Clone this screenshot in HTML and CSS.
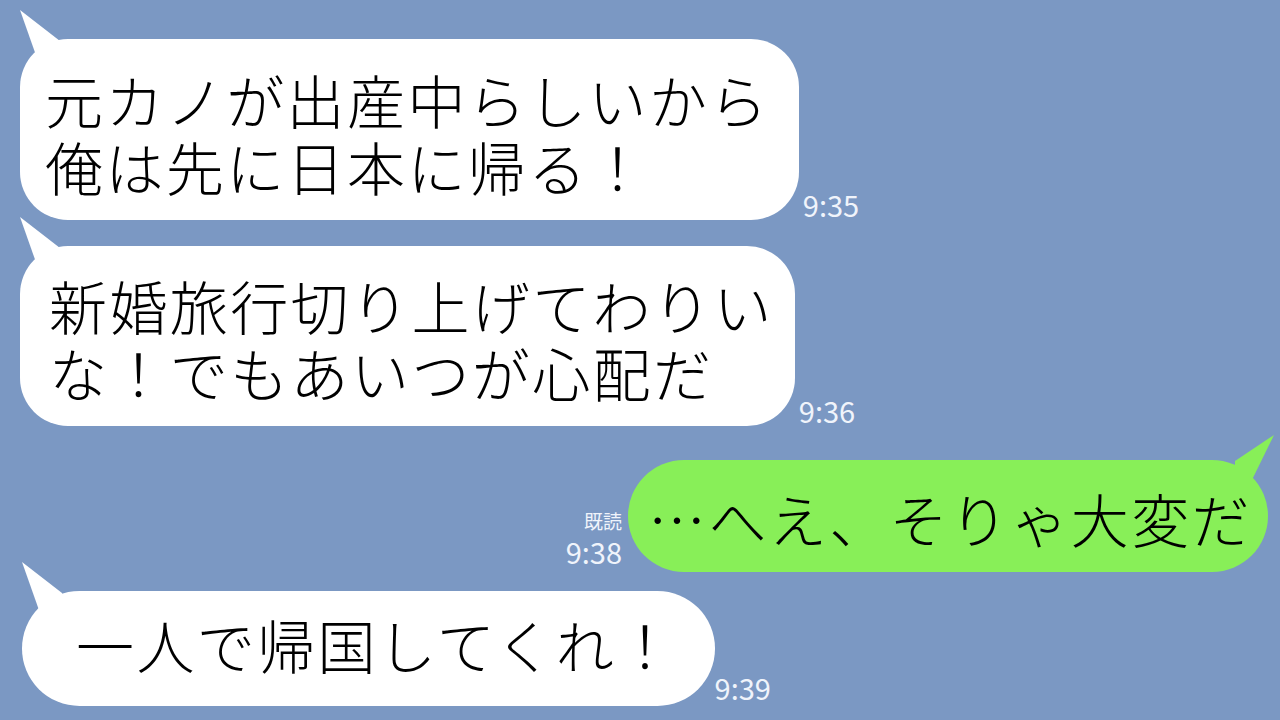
FILE: index.html
```html
<!DOCTYPE html>
<html lang="ja">
<head>
<meta charset="utf-8">
<title>LINE</title>
<link rel="stylesheet" href="styles.css">
</head>
<body>
<main class="chat">
  <div class="row row-in row-1">
    <div class="bubble bubble-in b1"><div class="line">元カノが出産中らしいから</div><div class="line">俺は先に日本に帰る！</div></div>
    <div class="meta"><span class="time">9:35</span></div>
  </div>
  <div class="row row-in row-2">
    <div class="bubble bubble-in b2"><div class="line">新婚旅行切り上げてわりい</div><div class="line">な！でもあいつが心配だ</div></div>
    <div class="meta"><span class="time">9:36</span></div>
  </div>
  <div class="row row-out row-3">
    <div class="meta meta-out"><span class="read">既読</span><span class="time">9:38</span></div>
    <div class="bubble bubble-out b3"><div class="line">…へえ、そりゃ大変だ</div></div>
  </div>
  <div class="row row-in row-4">
    <div class="bubble bubble-in b4"><div class="line">一人で帰国してくれ！</div></div>
    <div class="meta meta-4"><span class="time">9:39</span></div>
  </div>
</main>
</body>
</html>
```
FILE: styles.css
```css
html, body {
  margin: 0;
  padding: 0;
}
body {
  width: 1280px;
  height: 720px;
  overflow: hidden;
  background: #7b98c3;
  font-family: "Noto Sans CJK JP", "Noto Sans", sans-serif;
}
.chat {
  display: flex;
  flex-direction: column;
  padding: 39px 12px 0 20px;
}
.row {
  display: flex;
  align-items: flex-end;
  gap: 4px;
}
.row-out {
  justify-content: flex-end;
  gap: 6px;
}
.row-2 { margin-top: 26px; }
.row-3 { margin-top: 34px; }
.row-4 { margin-top: 19px; margin-left: 2px; gap: 0; }

.bubble {
  position: relative;
  color: #000;
  font-size: 58px;
  font-weight: 300;
  line-height: 67px;
  letter-spacing: 2.4px;
  white-space: nowrap;
}
.line {
  height: 67px;
}
.bubble-in {
  background: #fff;
  border-radius: 48px;
}
.bubble-in::before {
  content: "";
  position: absolute;
  left: 0;
  top: -30px;
  width: 44px;
  height: 52px;
  background: #fff;
  clip-path: polygon(0 1px, 40px 32px, 44px 52px, 18px 52px);
}
.bubble-out {
  background: #88ef58;
  border-radius: 56px;
}
.bubble-out::before {
  content: "";
  position: absolute;
  right: -6px;
  top: -26px;
  width: 44px;
  height: 52px;
  background: #88ef58;
  clip-path: polygon(44px 1px, 5px 27px, 5px 52px, 19px 52px);
}
.b1 { padding: 27px 29px 20px 25px; }
.b2 { padding: 26px 21px 20px 29px; }
.b3 { padding: 25px 16px 20px 20px; }
.b4 { padding: 20px 38px 28px 54px; border-radius: 58px; }

.meta {
  display: flex;
  flex-direction: column;
  align-items: flex-end;
  color: #f0f4fb;
  margin-bottom: 1px;
}
.meta-out { margin-bottom: 6px; }
.meta-4 { margin-bottom: 4px; }
.time {
  font-size: 29px;
  line-height: 30px;
}
.read {
  font-size: 19px;
  line-height: 22px;
  margin-bottom: 4px;
}
```
